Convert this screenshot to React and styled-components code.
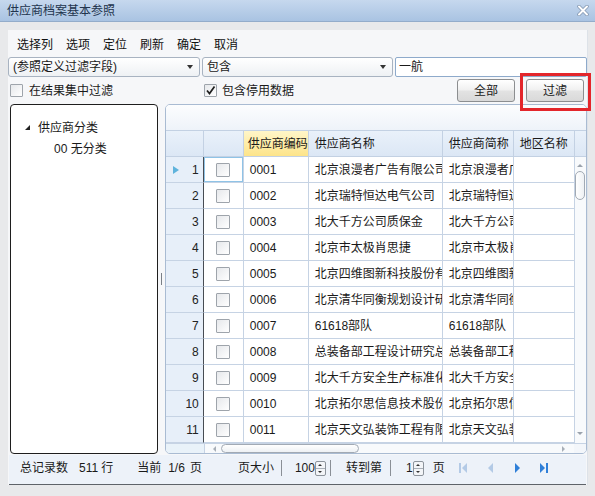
import React from "react";
import styled, { createGlobalStyle } from "styled-components";

const Global = createGlobalStyle`
  html, body { margin: 0; padding: 0; }
  body {
    width: 595px; height: 496px; overflow: hidden;
    background: #e8e9eb;
    font-family: "Liberation Sans", "Noto Sans CJK SC", sans-serif;
    font-size: 12px; color: #1a1a1a;
  }
  * { box-sizing: border-box; }
`;

const Window = styled.div`
  position: relative;
  width: 595px; height: 496px;
  display: flex; flex-direction: column;
`;

const TitleBar = styled.div`
  height: 22px; flex: none;
  display: flex; align-items: center; justify-content: space-between;
  padding: 0 6px 0 7px;
  background: linear-gradient(#c6d8ee, #a9c3e2);
  border-bottom: 1px solid #93acca;
`;
const Title = styled.span`
  font-size: 12px; line-height: 14px; color: #22344d;
`;

const Panel = styled.div`
  margin: 8px 0 0 8px; width: 580px; flex: none;
  background: #f6f7f9;
  border-right: 1px solid #dde2e8;
  display: flex; flex-direction: column;
`;

const Menu = styled.div`
  height: 27px; padding: 6px 0 0 9px;
  display: flex; gap: 13px;
`;
const MenuItem = styled.span`
  line-height: 18px; font-size: 12px; color: #111;
`;

const FilterRow = styled.div`
  height: 20px; display: grid;
  grid-template-columns: 192px 191px 192px; gap: 2px;
`;
const Select = styled.div`
  display: flex; align-items: center; justify-content: space-between;
  padding: 0 6px 0 4px;
  border: 1px solid #a8b3c1; border-radius: 3px;
  background: linear-gradient(#ffffff, #eef1f4);
  line-height: 16px;
`;
const Caret = styled.span`
  width: 0; height: 0;
  border-left: 3px solid transparent; border-right: 3px solid transparent;
  border-top: 4px solid #333;
`;
const TextInput = styled.div`
  display: flex; align-items: center; padding-left: 3px;
  border: 1px solid #8eaacb; border-radius: 2px; background: #fff;
  line-height: 16px;
`;

const OptionsRow = styled.div`
  height: 23px; margin-top: 2px;
  display: flex; align-items: center; padding: 0 3px 0 2px;
`;
const CheckGroup = styled.div`
  display: flex; align-items: center; gap: ${p => p.$gap || 6}px;
  width: ${p => (p.$w ? `${p.$w}px` : "auto")};
`;
const Box = styled.span`
  width: ${p => p.$size || 13}px; height: ${p => p.$size || 13}px; flex: none;
  border: 1px solid #9ea4ab; border-radius: 1px;
  background: linear-gradient(135deg, #e6e8eb, #ffffff);
  display: flex; align-items: center; justify-content: center;
`;
const Label = styled.span`
  line-height: 16px;
`;
const Buttons = styled.div`
  margin-left: auto; display: flex; gap: 11px;
`;
const Button = styled.div`
  width: 58px; height: 23px;
  display: flex; align-items: center; justify-content: center;
  border: 1px solid #8c8e90; border-radius: 3px;
  background: linear-gradient(#ffffff, #f1f1f1 45%, #e2e2e2 55%, #d9d9d9);
  line-height: 16px;
`;

const Main = styled.div`
  display: flex; height: 350px; margin-top: 2px;
`;
const TreeBox = styled.div`
  width: 148px; margin-left: 2px;
  background: #fff; border: 1px solid #1e1e1e; border-radius: 4px;
  padding-top: 12px;
`;
const TreeNode = styled.div`
  display: flex; align-items: center; height: 21px;
  padding-left: ${p => p.$indent}px; gap: 8px;
  line-height: 16px;
`;
const Splitter = styled.div`
  width: 7px; display: flex; align-items: center; justify-content: center;
  &::after { content: ""; width: 1px; height: 12px; background: #7a7f86; }
`;

const Grid = styled.div`
  width: 423px; height: 350px;
  border: 1px solid #a9bbd2; border-radius: 5px; overflow: hidden;
  display: flex; flex-direction: column;
  background: #f5f8fc;
`;
const GroupBand = styled.div`
  height: 25px; flex: none;
  background: linear-gradient(#fcfdfe, #eef3f9);
`;
const GridBody = styled.div`
  display: flex; height: 313px; flex: none;
`;
const TableArea = styled.div`
  width: 409px; display: flex; flex-direction: column;
`;
const cols = "38px 40px 65px 134px 71px 61px";
const HeadRow = styled.div`
  display: grid; grid-template-columns: ${cols}; height: 27px;
`;
const HeadCell = styled.div`
  display: flex; align-items: center; padding-left: 4px;
  overflow: hidden; white-space: nowrap;
  border-top: 1px solid #c3d1e3; border-right: 1px solid #c3d1e3; border-bottom: 1px solid #c3d1e3;
  background: ${p => (p.$sorted ? "linear-gradient(#fff6c8, #fde48a)" : "linear-gradient(#e9f1fa, #dce7f5)")};
  line-height: 16px;
`;
const DataRow = styled.div`
  display: grid; grid-template-columns: ${cols}; height: 26px;
`;
const RowHead = styled.div`
  display: flex; align-items: center; padding: 0 4px 0 7px;
  background: #e7eff9;
  border-right: 1px solid #474c53; border-bottom: 1px solid #c6d3e4;
`;
const RowNum = styled.span`
  margin-left: auto; line-height: 16px; color: #222;
`;
const Indicator = styled.span`
  width: 0; height: 0;
  border-top: 4px solid transparent; border-bottom: 4px solid transparent;
  border-left: 6px solid #5fb3dc;
`;
const CheckCell = styled.div`
  display: flex; align-items: center; justify-content: center;
  background: #fff;
  border-right: 1px solid #c6d3e4; border-bottom: 1px solid #c6d3e4;
  box-shadow: ${p => (p.$focus ? "inset 0 0 0 1px #8fc3e6" : "none")};
`;
const Cell = styled.div`
  display: flex; align-items: center; padding-left: 6px;
  overflow: hidden; white-space: nowrap;
  background: #fff;
  border-right: 1px solid #c6d3e4; border-bottom: 1px solid #c6d3e4;
  line-height: 16px;
`;
const VScroll = styled.div`
  width: 12px; display: flex; flex-direction: column;
`;
const VHead = styled.div`
  height: 27px; flex: none;
  border-top: 1px solid #c3d1e3; border-bottom: 1px solid #c3d1e3;
  background: linear-gradient(#e9f1fa, #dce7f5);
`;
const VTrack = styled.div`
  flex: 1; background: #f8fafc; position: relative;
  display: flex; flex-direction: column; align-items: center;
  padding: 7px 0 8px;
`;
const VThumb = styled.div`
  width: 10px; height: 29px; margin-top: 4px;
  border: 1px solid #a2aab4; border-radius: 5px;
  background: linear-gradient(90deg, #ffffff, #eef1f4);
`;
const ArrowUp = styled.span`
  width: 0; height: 0;
  border-left: 3px solid transparent; border-right: 3px solid transparent;
  border-bottom: 3px solid #9aa2ac;
`;
const ArrowDown = styled.span`
  margin-top: auto;
  width: 0; height: 0;
  border-left: 3px solid transparent; border-right: 3px solid transparent;
  border-top: 3px solid #9aa2ac;
`;
const HScrollRow = styled.div`
  height: 10px; flex: none; display: flex;
  border-top: 1px solid #c6d3e4;
`;
const HBlank = styled.div`
  width: ${p => p.$w}px; background: ${p => p.$bg};
`;
const HTrack = styled.div`
  width: 371px; background: #f8fafc;
  display: flex; align-items: center; padding: 0 9px 0 8px;
  border-left: 1px solid #c6d3e4;
`;
const HThumb = styled.div`
  width: 138px; height: 9px; margin-left: 5px;
  border: 1px solid #a2aab4; border-radius: 5px;
  background: linear-gradient(#ffffff, #eef1f4);
`;
const ArrowLeft = styled.span`
  width: 0; height: 0;
  border-top: 3px solid transparent; border-bottom: 3px solid transparent;
  border-right: 3px solid #a8afb8;
`;
const ArrowRight = styled.span`
  margin-left: auto;
  width: 0; height: 0;
  border-top: 3px solid transparent; border-bottom: 3px solid transparent;
  border-left: 3px solid #a8afb8;
`;

const Footer = styled.div`
  height: 30px; margin: 1px 1px 0 1px;
  display: flex; align-items: center; padding-bottom: 3px;
  background: #edf2f9;
  border-bottom: 1px solid #5e6369;
`;
const Piece = styled.span`
  margin-left: ${p => p.$ml}px; line-height: 16px; flex: none; display: flex; align-items: center;
`;
const Sep = styled.span`
  margin-left: ${p => p.$ml}px; width: 1px; height: 16px; background: #8a8f96; flex: none;
`;
const Spinner = styled.span`
  width: 11px; height: 15px; flex: none;
  border: 1px solid #8d949c; border-radius: 2px;
  display: flex; flex-direction: column; background: #f3f5f8;
`;
const SpinHalf = styled.span`
  flex: 1; display: flex; align-items: center; justify-content: center;
  & + & { border-top: 1px solid #a9b0b8; }
`;
const SpinUp = styled.span`
  width: 0; height: 0;
  border-left: 2px solid transparent; border-right: 2px solid transparent;
  border-bottom: 2px solid #333;
`;
const SpinDown = styled.span`
  width: 0; height: 0;
  border-left: 2px solid transparent; border-right: 2px solid transparent;
  border-top: 2px solid #333;
`;

const Highlight = styled.div`
  position: absolute; left: 520px; top: 73px;
  width: 71px; height: 38px;
  border: 3px solid #e3262b;
`;

const rows = [
  ["0001", "北京浪漫者广告有限公司", "北京浪漫者广告有限公司"],
  ["0002", "北京瑞特恒达电气公司", "北京瑞特恒达电气公司"],
  ["0003", "北大千方公司质保金", "北大千方公司质保金"],
  ["0004", "北京市太极肖思捷", "北京市太极肖思捷"],
  ["0005", "北京四维图新科技股份有限公司", "北京四维图新科技股份"],
  ["0006", "北京清华同衡规划设计研究院", "北京清华同衡规划"],
  ["0007", "61618部队", "61618部队"],
  ["0008", "总装备部工程设计研究总院", "总装备部工程设计"],
  ["0009", "北大千方安全生产标准化", "北大千方安全生产"],
  ["0010", "北京拓尔思信息技术股份有限公司", "北京拓尔思信息技术"],
  ["0011", "北京天文弘装饰工程有限公司", "北京天文弘装饰工程"],
];

const CloseIcon = () => (
  <svg width="12" height="11" viewBox="0 0 12 11">
    <path d="M2 1.5 L10 9.5 M10 1.5 L2 9.5" stroke="#7e93ad" strokeWidth="3.4" strokeLinecap="round" />
    <path d="M2 1.5 L10 9.5 M10 1.5 L2 9.5" stroke="#ffffff" strokeWidth="2" strokeLinecap="round" />
  </svg>
);

const CheckMark = () => (
  <svg width="11" height="11" viewBox="0 0 11 11">
    <path d="M2 5.5 L4.5 8.5 L9.5 1.5" fill="none" stroke="#1e1e1e" strokeWidth="1.7" />
  </svg>
);

const TreeArrow = () => (
  <svg width="5" height="5" viewBox="0 0 5 5">
    <polygon points="5,0 5,5 0,5" fill="#222" />
  </svg>
);

const Nav = ({ dir, bar, color }) => (
  <svg width="9" height="12" viewBox="0 0 9 12">
    {dir === "left" ? (
      <>
        {bar && <rect x="0" y="1" width="2" height="10" fill={color} />}
        <polygon points={bar ? "8,1 3,6 8,11" : "7,1 2,6 7,11"} fill={color} />
      </>
    ) : (
      <>
        <polygon points={bar ? "1,1 6,6 1,11" : "2,1 7,6 2,11"} fill={color} />
        {bar && <rect x="7" y="1" width="2" height="10" fill={color} />}
      </>
    )}
  </svg>
);

const Spin = () => (
  <Spinner>
    <SpinHalf><SpinUp /></SpinHalf>
    <SpinHalf><SpinDown /></SpinHalf>
  </Spinner>
);

export default function App() {
  return (
    <>
      <Global />
      <Window>
        <TitleBar>
          <Title>供应商档案基本参照</Title>
          <CloseIcon />
        </TitleBar>
        <Panel>
          <Menu>
            {["选择列", "选项", "定位", "刷新", "确定", "取消"].map(m => (
              <MenuItem key={m}>{m}</MenuItem>
            ))}
          </Menu>
          <FilterRow>
            <Select><span>(参照定义过滤字段)</span><Caret /></Select>
            <Select><span>包含</span><Caret /></Select>
            <TextInput>一航</TextInput>
          </FilterRow>
          <OptionsRow>
            <CheckGroup $w={194}>
              <Box />
              <Label>在结果集中过滤</Label>
            </CheckGroup>
            <CheckGroup $gap={5}>
              <Box><CheckMark /></Box>
              <Label>包含停用数据</Label>
            </CheckGroup>
            <Buttons>
              <Button>全部</Button>
              <Button>过滤</Button>
            </Buttons>
          </OptionsRow>
          <Main>
            <TreeBox>
              <TreeNode $indent={14}>
                <TreeArrow />
                <span>供应商分类</span>
              </TreeNode>
              <TreeNode $indent={43}>
                <span>00 无分类</span>
              </TreeNode>
            </TreeBox>
            <Splitter />
            <Grid>
              <GroupBand />
              <GridBody>
                <TableArea>
                  <HeadRow>
                    <HeadCell />
                    <HeadCell />
                    <HeadCell $sorted>供应商编码</HeadCell>
                    <HeadCell style={{ paddingLeft: 6 }}>供应商名称</HeadCell>
                    <HeadCell style={{ paddingLeft: 6 }}>供应商简称</HeadCell>
                    <HeadCell style={{ paddingLeft: 6 }}>地区名称</HeadCell>
                  </HeadRow>
                  {rows.map((r, i) => (
                    <DataRow key={r[0]}>
                      <RowHead>
                        {i === 0 && <Indicator />}
                        <RowNum>{i + 1}</RowNum>
                      </RowHead>
                      <CheckCell $focus={i === 0}>
                        <Box $size={14} />
                      </CheckCell>
                      <Cell>{r[0]}</Cell>
                      <Cell>{r[1]}</Cell>
                      <Cell>{r[2]}</Cell>
                      <Cell />
                    </DataRow>
                  ))}
                </TableArea>
                <VScroll>
                  <VHead />
                  <VTrack>
                    <ArrowUp />
                    <VThumb />
                    <ArrowDown />
                  </VTrack>
                </VScroll>
              </GridBody>
              <HScrollRow>
                <HBlank $w={38} $bg="#e9f2f9" />
                <HTrack>
                  <ArrowLeft />
                  <HThumb />
                  <ArrowRight />
                </HTrack>
                <HBlank $w={12} $bg="#f3f6fa" />
              </HScrollRow>
            </Grid>
          </Main>
          <Footer>
            <Piece $ml={11}>总记录数</Piece>
            <Piece $ml={11}>511</Piece>
            <Piece $ml={3}>行</Piece>
            <Piece $ml={24}>当前</Piece>
            <Piece $ml={7}>1/6</Piece>
            <Piece $ml={5}>页</Piece>
            <Piece $ml={36}>页大小</Piece>
            <Sep $ml={7} />
            <Piece $ml={13}>100</Piece>
            <Spin />
            <Sep $ml={4} />
            <Piece $ml={15}>转到第</Piece>
            <Sep $ml={8} />
            <Piece $ml={15}>1</Piece>
            <Spin />
            <Piece $ml={9}>页</Piece>
            <Piece $ml={14}><Nav dir="left" bar color="#b3cae6" /></Piece>
            <Piece $ml={18}><Nav dir="left" color="#b3cae6" /></Piece>
            <Piece $ml={18}><Nav dir="right" color="#2f7fd8" /></Piece>
            <Piece $ml={17}><Nav dir="right" bar color="#2f7fd8" /></Piece>
          </Footer>
        </Panel>
        <Highlight />
      </Window>
    </>
  );
}
